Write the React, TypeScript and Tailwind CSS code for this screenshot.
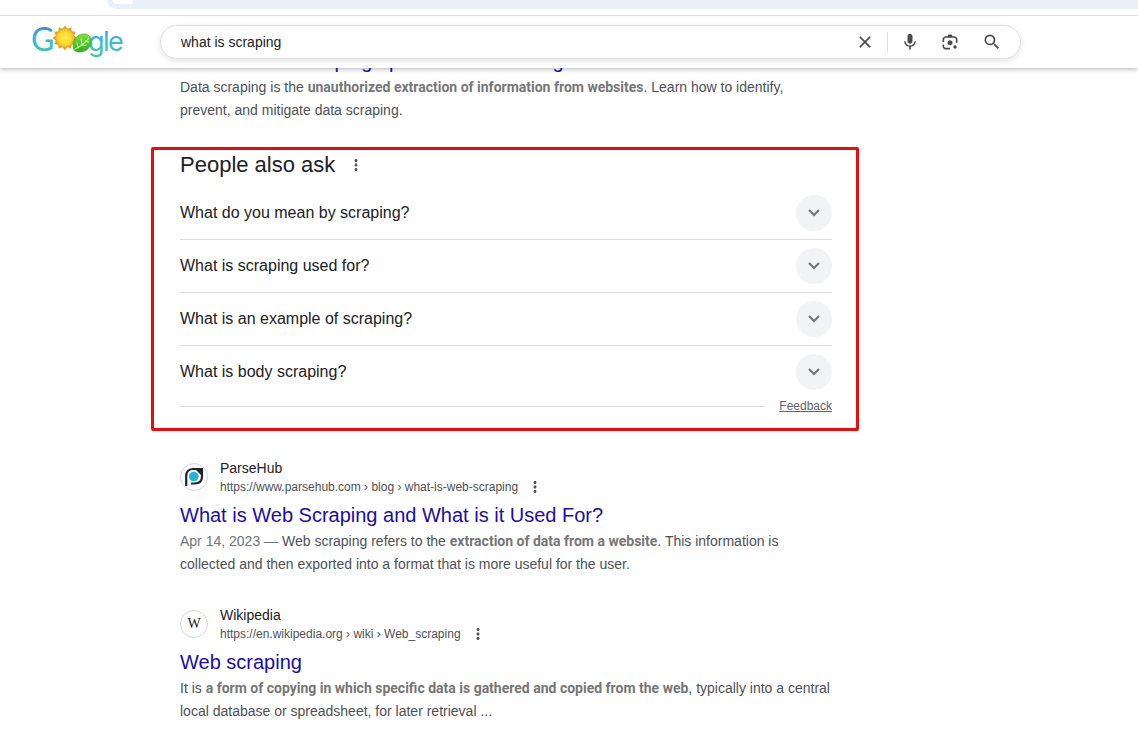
import type { ReactNode } from 'react';
import { MdClose, MdMic, MdMoreVert, MdSearch } from 'react-icons/md';

const questions = [
    'What do you mean by scraping?',
    'What is scraping used for?',
    'What is an example of scraping?',
    'What is body scraping?',
];

// Twelve rays around the centre of the sun
const rays = Array.from({ length: 24 }, (_, i) => {
    const radius = i % 2 ? 9.5 : 12.5;
    const angle = (i * Math.PI) / 12;
    return `${34 + radius * Math.sin(angle)},${18 - radius * Math.cos(angle)}`;
}).join(' ');

const Logo = () => (
    <svg viewBox="0 0 98 44" className="h-11 w-[98px]" role="img" aria-label="Google">
        <defs>
            <linearGradient id="letters" x1="0" y1="7" x2="0" y2="36" gradientUnits="userSpaceOnUse">
                <stop offset="0" stopColor="#3a8fd8" />
                <stop offset="0.45" stopColor="#3cb8d8" />
                <stop offset="1" stopColor="#35cf9c" />
            </linearGradient>
            <radialGradient id="sun">
                <stop offset="0" stopColor="#ffee4a" />
                <stop offset="0.7" stopColor="#fbd72c" />
                <stop offset="1" stopColor="#ecbd24" />
            </radialGradient>
            <linearGradient id="leaf" x1="0" y1="0" x2="0" y2="1">
                <stop offset="0" stopColor="#7be03c" />
                <stop offset="1" stopColor="#2fb026" />
            </linearGradient>
        </defs>
        <g fill="url(#letters)">
            <text x="0" y="31" fontSize="32" fontFamily="Lato, sans-serif">G</text>
            <text x="57 72 77" y="31" fontSize="27" fontFamily="Inter, sans-serif">gle</text>
        </g>
        {/* Sun */}
        <polygon points={rays} fill="#dfa527" strokeLinejoin="round" />
        <circle cx="34" cy="18" r="9" fill="url(#sun)" />
        {/* Leaf */}
        <path
            d="M43 30c-3-9 2-15 9-16 5-.5 8 2 8 7 0 6-4 10-10 11-3 .3-5-.2-7-2z"
            fill="url(#leaf)"
            stroke="#2b9f25"
            strokeWidth="0.6"
        />
        <path
            d="M44 29c5-2 10-6 14-11M47 27l-1-4M51 24l-1-5M50 25l5 .5M54 21l3.500 1"
            fill="none"
            stroke="#c2f59b"
            strokeWidth="1.200"
            strokeLinecap="round"
        />
    </svg>
);

const LensIcon = () => (
    <svg viewBox="0 -960 960 960" className="size-5" fill="currentColor" aria-hidden="true">
        <path d="M480-320q-50 0-85-35t-35-85q0-50 35-85t85-35q50 0 85 35t35 85q0 50-35 85t-85 35Zm240 160q-33 0-56.500-23.500T640-240q0-33 23.500-56.500T720-320q33 0 56.500 23.500T800-240q0 33-23.500 56.500T720-160Zm-440 40q-66 0-113-47t-47-113v-80h80v80q0 33 23.500 56.500T280-200h200v80H280Zm480-320v-160q0-33-23.500-56.500T680-680H280q-33 0-56.500 23.500T200-600v120h-80v-120q0-66 47-113t113-47h80l40-80h160l40 80h80q66 0 113 47t47 113v160h-80Z" />
    </svg>
);

const ChevronIcon = () => (
    <svg viewBox="0 0 12 8" className="h-2 w-3" fill="none" stroke="currentColor" strokeWidth="2" aria-hidden="true">
        <path d="M1 1l5 5 5-5" />
    </svg>
);

const ParseHubIcon = () => (
    <svg viewBox="0 0 20 20" className="size-5" aria-hidden="true">
        <path
            d="M2.200 19V9C2.200 4.500 5 2 9.500 2H18v7.500c0 4.500-2.700 7-7.500 7H7"
            fill="none"
            stroke="#20242e"
            strokeWidth="2.200"
        />
        <path d="M10 1h9v9z" fill="#20242e" />
        <circle cx="9.800" cy="9.500" r="5.200" fill="#21b8d1" stroke="#fff" strokeWidth="0.8" />
    </svg>
);

interface ResultProps {
    site: string;
    url: string;
    title: string;
    icon: ReactNode;
    children: ReactNode;
}

const Strong = ({ children }: { children: ReactNode }) => (
    <strong className="font-[Roboto,sans-serif] font-bold text-[#767676]">{children}</strong>
);

const Result = ({ site, url, title, icon, children }: ResultProps) => (
    <article className="mb-[29px]">
        <div className="flex items-center gap-3">
            <span className="flex size-7 shrink-0 items-center justify-center overflow-hidden rounded-full border border-[#d2d5da] bg-white">
                {icon}
            </span>
            <div>
                <p className="text-sm leading-5 text-[#202124]">{site}</p>
                <div className="flex h-[18px] items-center gap-2">
                    <cite className="text-xs not-italic text-[#4d5156]">{url}</cite>
                    <button type="button" aria-label="About this result" className="text-[#4d5156]">
                        <MdMoreVert size={18} />
                    </button>
                </div>
            </div>
        </div>
        <h3 className="mt-1.5 text-xl leading-[26px]">
            <a href="#" className="text-[#1a0dab]">{title}</a>
        </h3>
        <p className="mt-0.5 text-sm leading-[23px] text-[#4d5156]">{children}</p>
    </article>
);

const App = () => (
    <div className="min-h-screen overflow-hidden bg-white font-['Liberation_Sans',Arial,sans-serif]">
        <header className="relative z-10 bg-white shadow-[0_1px_5px_rgba(32,33,36,0.35)]">
            {/* Bottom edge of the browser's address bar */}
            <div className="h-4 border-b border-[#dadce0] pl-[107px]">
                <div className="h-[9px] overflow-hidden rounded-bl-2xl bg-[#e9f0fa] pl-1.5">
                    <div className="h-1 w-5 rounded-b-full bg-white" />
                </div>
            </div>
            <div className="flex h-[52px] items-center pl-[31px] pr-6">
                <a href="#" className="w-[129px] shrink-0">
                    <Logo />
                </a>
                <form className="flex h-[34px] w-full max-w-[861px] items-center rounded-full border border-[#dfe1e5] bg-white pl-5 pr-[18px] text-[#4a4a4a] shadow-[0_2px_6px_rgba(60,64,67,0.14)]">
                    <input
                        type="text"
                        aria-label="Search"
                        defaultValue="what is scraping"
                        className="min-w-0 flex-1 text-sm text-[#202124] outline-none"
                    />
                    <button type="button" aria-label="Clear" className="pr-3">
                        <MdClose size={20} />
                    </button>
                    <span className="h-5 w-px bg-[#dadce0]" />
                    <button type="button" aria-label="Search by voice" className="pl-3">
                        <MdMic size={20} />
                    </button>
                    <button type="button" aria-label="Search by image" className="pl-5">
                        <LensIcon />
                    </button>
                    <button type="submit" aria-label="Submit search" className="pl-[22px]">
                        <MdSearch size={20} />
                    </button>
                </form>
            </div>
        </header>

        {/* Scrolled so that the first title sits under the header */}
        <main className="-mt-5 ml-[151px] max-w-[708px]">
            <article className="px-[29px]">
                <h3 className="text-xl leading-[26px]">
                    <a href="#" className="text-[#1a0dab]">What is data scraping? protection and mitigation</a>
                </h3>
                <p className="mt-0.5 text-sm leading-[23px] text-[#4d5156]">
                    Data scraping is the <Strong>unauthorized extraction of information from websites</Strong>. Learn how
                    to identify, prevent, and mitigate data scraping.
                </p>
            </article>

            <section className="mt-[25px] rounded-xs border-3 border-[#ee0a0a] pt-px pr-6 pb-3.5 pl-[26px]">
                <div className="flex items-center gap-3">
                    <h2 className="text-[22px] leading-7 text-[#202124]">People also ask</h2>
                    <button type="button" aria-label="About these questions" className="text-[#4d5156]">
                        <MdMoreVert size={18} />
                    </button>
                </div>
                <ul className="mt-2">
                    {questions.map((question) => (
                        <li key={question} className="border-b border-[#dadce0] last:border-b-0">
                            <button type="button" className="flex h-13 w-full items-center justify-between text-left">
                                <span className="text-base text-[#202124]">{question}</span>
                                <span className="flex size-9 items-center justify-center rounded-full bg-[#f1f3f4] text-[#70757a]">
                                    <ChevronIcon />
                                </span>
                            </button>
                        </li>
                    ))}
                </ul>
                <div className="flex h-4 items-center gap-3.5">
                    <span className="h-px flex-1 bg-[#dadce0]" />
                    <a href="#" className="text-xs text-[#5f6368] underline">Feedback</a>
                </div>
            </section>

            <div className="mt-[27px] pr-6 pl-[29px]">
                <Result
                    site="ParseHub"
                    url="https://www.parsehub.com › blog › what-is-web-scraping"
                    title="What is Web Scraping and What is it Used For?"
                    icon={<ParseHubIcon />}
                >
                    <span className="text-[#70757a]">Apr 14, 2023 — </span>
                    Web scraping refers to the <Strong>extraction of data from a website</Strong>. This information is
                    collected and then exported into a format that is more useful for the user.
                </Result>
                <Result
                    site="Wikipedia"
                    url="https://en.wikipedia.org › wiki › Web_scraping"
                    title="Web scraping"
                    icon={<span className="font-['Liberation_Serif',serif] text-sm text-[#202124]">W</span>}
                >
                    It is <Strong>a form of copying in which specific data is gathered and copied from the web</Strong>,
                    typically into a central local database or spreadsheet, for later retrieval ...
                </Result>
            </div>
        </main>
    </div>
);

export default App;
